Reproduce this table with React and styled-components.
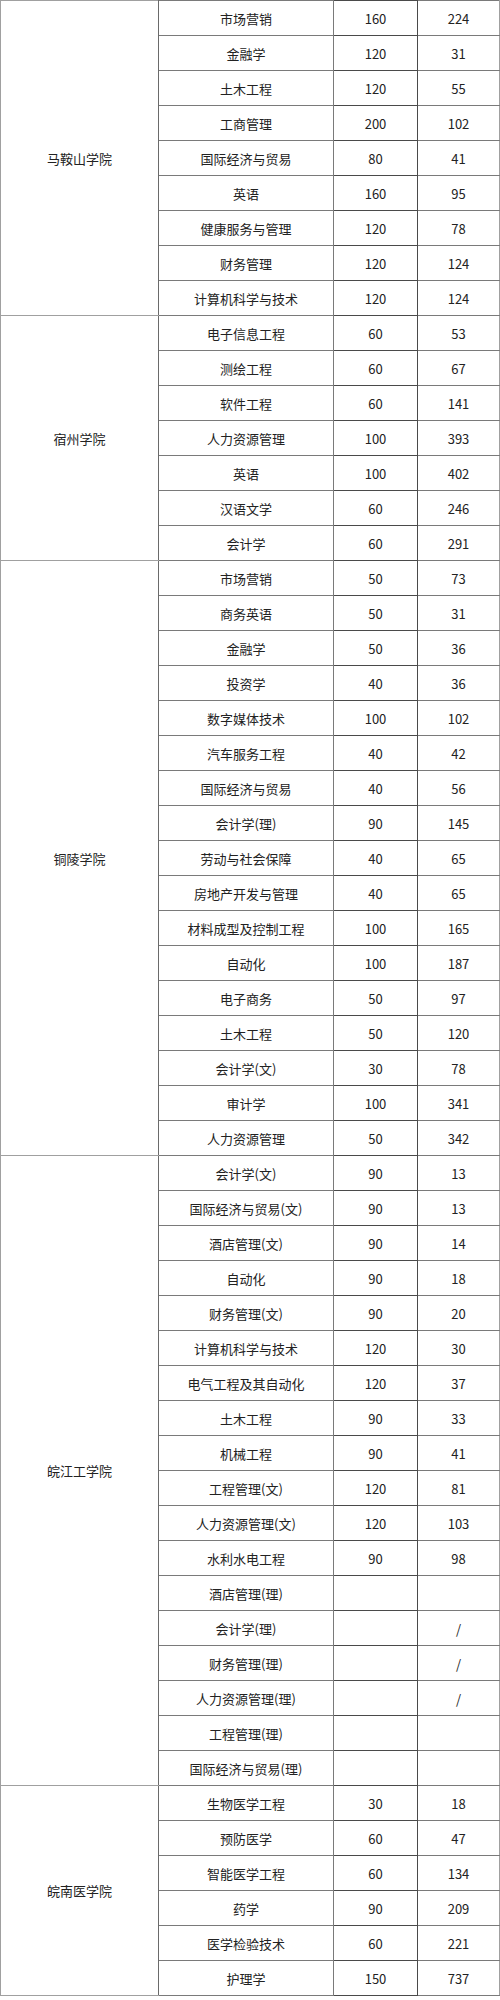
import React from 'react';
import styled, { createGlobalStyle } from 'styled-components';

const GlobalStyle = createGlobalStyle`
    html, body {
        margin: 0;
        padding: 0;
        background: #ffffff;
    }
    body {
        font-family: "Noto Sans CJK SC", "Noto Sans", sans-serif;
        color: #222222;
    }
`;

const data = [
    {
        school: '马鞍山学院',
        rows: [
            ['市场营销', '160', '224'],
            ['金融学', '120', '31'],
            ['土木工程', '120', '55'],
            ['工商管理', '200', '102'],
            ['国际经济与贸易', '80', '41'],
            ['英语', '160', '95'],
            ['健康服务与管理', '120', '78'],
            ['财务管理', '120', '124'],
            ['计算机科学与技术', '120', '124'],
        ],
    },
    {
        school: '宿州学院',
        rows: [
            ['电子信息工程', '60', '53'],
            ['测绘工程', '60', '67'],
            ['软件工程', '60', '141'],
            ['人力资源管理', '100', '393'],
            ['英语', '100', '402'],
            ['汉语文学', '60', '246'],
            ['会计学', '60', '291'],
        ],
    },
    {
        school: '铜陵学院',
        rows: [
            ['市场营销', '50', '73'],
            ['商务英语', '50', '31'],
            ['金融学', '50', '36'],
            ['投资学', '40', '36'],
            ['数字媒体技术', '100', '102'],
            ['汽车服务工程', '40', '42'],
            ['国际经济与贸易', '40', '56'],
            ['会计学(理)', '90', '145'],
            ['劳动与社会保障', '40', '65'],
            ['房地产开发与管理', '40', '65'],
            ['材料成型及控制工程', '100', '165'],
            ['自动化', '100', '187'],
            ['电子商务', '50', '97'],
            ['土木工程', '50', '120'],
            ['会计学(文)', '30', '78'],
            ['审计学', '100', '341'],
            ['人力资源管理', '50', '342'],
        ],
    },
    {
        school: '皖江工学院',
        rows: [
            ['会计学(文)', '90', '13'],
            ['国际经济与贸易(文)', '90', '13'],
            ['酒店管理(文)', '90', '14'],
            ['自动化', '90', '18'],
            ['财务管理(文)', '90', '20'],
            ['计算机科学与技术', '120', '30'],
            ['电气工程及其自动化', '120', '37'],
            ['土木工程', '90', '33'],
            ['机械工程', '90', '41'],
            ['工程管理(文)', '120', '81'],
            ['人力资源管理(文)', '120', '103'],
            ['水利水电工程', '90', '98'],
            ['酒店管理(理)', '', ''],
            ['会计学(理)', '', '/'],
            ['财务管理(理)', '', '/'],
            ['人力资源管理(理)', '', '/'],
            ['工程管理(理)', '', ''],
            ['国际经济与贸易(理)', '', ''],
        ],
    },
    {
        school: '皖南医学院',
        rows: [
            ['生物医学工程', '30', '18'],
            ['预防医学', '60', '47'],
            ['智能医学工程', '60', '134'],
            ['药学', '90', '209'],
            ['医学检验技术', '60', '221'],
            ['护理学', '150', '737'],
        ],
    },
];

const Table = styled.table`
    width: 499px;
    border-collapse: collapse;
    table-layout: fixed;
    font-size: 13px;
    line-height: 1;
`;

const Col = styled.col`
    width: ${(p) => p.$w}px;
`;

const Row = styled.tr`
    height: 35px;
`;

const SchoolCell = styled.td`
    border: 1px solid #a0a0a0;
    border-right-color: #6a6a6a;
    text-align: center;
    vertical-align: middle;
    padding: 0;
`;

const Cell = styled.td`
    border: 1px solid ${(p) => (p.$dark ? '#4a4a4a' : '#7a7a7a')};
    border-right-color: ${(p) => (p.$last ? '#a0a0a0' : p.$dark ? '#4a4a4a' : '#7a7a7a')};
    text-align: center;
    vertical-align: middle;
    padding: 0;
    height: 34px;
    white-space: nowrap;
`;

const App = () => {
    return (
        <>
            <GlobalStyle />
            <Table>
                <colgroup>
                    <Col $w={158} />
                    <Col $w={175} />
                    <Col $w={84} />
                    <Col $w={82} />
                </colgroup>
                <tbody>
                    {data.map((group) =>
                        group.rows.map((r, i) => (
                            <Row key={group.school + i}>
                                {i === 0 && (
                                    <SchoolCell rowSpan={group.rows.length}>
                                        {group.school}
                                    </SchoolCell>
                                )}
                                <Cell>{r[0]}</Cell>
                                <Cell $dark>{r[1]}</Cell>
                                <Cell $last>{r[2]}</Cell>
                            </Row>
                        ))
                    )}
                </tbody>
            </Table>
        </>
    );
};

export default App;
